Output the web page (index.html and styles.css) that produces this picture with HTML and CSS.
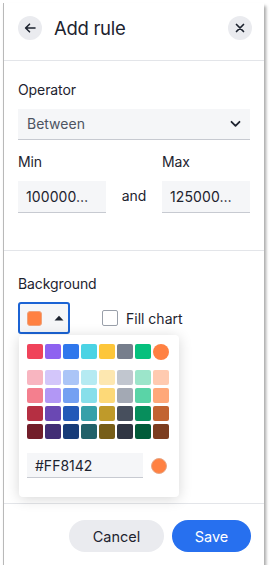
FILE: index.html
```html
<!DOCTYPE html>
<html>
<head>
<meta charset="utf-8">
<link rel="stylesheet" href="styles.css">
</head>
<body>
<div class="panel">
  <div class="header">
    <button class="icon-btn" aria-label="Back">
      <svg width="12" height="12" viewBox="0 0 12 12"><path d="M11 6H1.8M5.5 2.2L1.6 6l3.9 3.8" fill="none" stroke="#1d232f" stroke-width="1.6" stroke-linecap="round" stroke-linejoin="round"/></svg>
    </button>
    <div class="title">Add rule</div>
    <button class="icon-btn" aria-label="Close">
      <svg width="10" height="10" viewBox="0 0 10 10"><path d="M1.5 1.5l7 7M8.5 1.5l-7 7" fill="none" stroke="#1d232f" stroke-width="1.7" stroke-linecap="round"/></svg>
    </button>
  </div>
  <div class="section cond">
    <div class="label">Operator</div>
    <div class="select">
      <span>Between</span>
      <svg width="11" height="8" viewBox="0 0 11 8"><path d="M1.5 1.8l4 4 4-4" fill="none" stroke="#1d232f" stroke-width="1.8" stroke-linecap="round" stroke-linejoin="round"/></svg>
    </div>
    <div class="range">
      <div class="field">
        <div class="label">Min</div>
        <div class="input">100000…</div>
      </div>
      <div class="and">and</div>
      <div class="field">
        <div class="label">Max</div>
        <div class="input">125000…</div>
      </div>
    </div>
  </div>
  <div class="section bg">
    <div class="label">Background</div>
    <div class="bg-row">
      <div class="color-btn">
        <span class="chip"></span>
        <svg width="10" height="6" viewBox="0 0 10 6"><path d="M0.5 5.5L5 0.8l4.5 4.7z" fill="#1d232f"/></svg>
      </div>
      <label class="check"><span class="box"></span>Fill chart</label>
    </div>
    <div class="popover">
      <div class="grid top">
        <span style="background:#f0435a"></span><span style="background:#8e62f0"></span><span style="background:#2f77ec"></span><span style="background:#4bd3e4"></span><span style="background:#fdc63a"></span><span style="background:#767e8c"></span><span style="background:#06c07d"></span><span class="sel" style="background:#ff8142"></span>
      </div>
      <div class="grid">
        <span style="background:#f8b5c0"></span><span style="background:#d3c6fa"></span><span style="background:#abc5f7"></span><span style="background:#b5eaf2"></span><span style="background:#fde7b0"></span><span style="background:#c1c6cf"></span><span style="background:#9ce5ca"></span><span style="background:#ffcab0"></span>
        <span style="background:#f47f8e"></span><span style="background:#b297f5"></span><span style="background:#74a0f2"></span><span style="background:#87dfea"></span><span style="background:#fdd978"></span><span style="background:#a3a9b4"></span><span style="background:#5ad4a7"></span><span style="background:#ffa879"></span>
        <span style="background:#b52f42"></span><span style="background:#6a48b3"></span><span style="background:#2359b8"></span><span style="background:#36a0a9"></span><span style="background:#bf9a2a"></span><span style="background:#474f5d"></span><span style="background:#078e5c"></span><span style="background:#c26331"></span>
        <span style="background:#721e2a"></span><span style="background:#422d75"></span><span style="background:#173b78"></span><span style="background:#216169"></span><span style="background:#775e18"></span><span style="background:#2f3542"></span><span style="background:#025b39"></span><span style="background:#7c3d1f"></span>
      </div>
      <div class="hex-row">
        <div class="hex">#FF8142</div>
        <span class="dot"></span>
      </div>
    </div>
  </div>
  <div class="footer">
    <button class="btn cancel">Cancel</button>
    <button class="btn save">Save</button>
  </div>
</div>
</body>
</html>
```

FILE: styles.css
```css
* { box-sizing: border-box; }
html, body { margin: 0; padding: 0; background: #fff; }
body {
  padding: 3px 0 0 3px;
  font-family: Inter, "Noto Sans", sans-serif;
  color: #1d232f;
}
.panel {
  width: 261px;
  height: 562px;
  background: #fff;
  border-left: 1px solid #b9b9b9;
  box-shadow: 2px 3px 3px rgba(0,0,0,0.35);
  display: flex;
  flex-direction: column;
}
.header {
  height: 58px;
  flex: none;
  display: flex;
  align-items: center;
  padding: 0 12px 8px 14px;
  border-bottom: 1px solid #e3e5e9;
}
.icon-btn {
  width: 24px;
  height: 24px;
  border-radius: 50%;
  border: none;
  background: #eaebef;
  padding: 0;
  display: flex;
  align-items: center;
  justify-content: center;
  flex: none;
}
.title {
  flex: 1;
  margin-left: 12px;
  font-size: 18.5px;
  letter-spacing: -0.3px;
  color: #1d232f;
}
.section { padding: 0 14px; position: relative; }
.label {
  font-size: 14px;
  line-height: 20px;
  color: #1d232f;
  letter-spacing: -0.1px;
}
.cond { padding-top: 19px; height: 190px; flex: none; border-bottom: 1px solid #e3e5e9; }
.select {
  margin-top: 9px;
  height: 31px;
  background: #f5f6f8;
  border-bottom: 1px solid #c7cad1;
  display: flex;
  align-items: center;
  justify-content: space-between;
  padding: 0 9px 1px 9px;
  font-size: 14px;
  color: #4d5462;
}
.range {
  margin-top: 12px;
  display: flex;
  align-items: flex-end;
}
.field { width: 88px; }
.field .input {
  margin-top: 9px;
  height: 32px;
  background: #f5f6f8;
  border-bottom: 1px solid #c7cad1;
  display: flex;
  align-items: center;
  padding-left: 8px;
  font-size: 14px;
  letter-spacing: 0.1px;
  color: #1d232f;
}
.and {
  width: 56px;
  text-align: center;
  font-size: 14px;
  height: 32px;
  line-height: 30px;
  color: #1d232f;
}
.bg { flex: 1; padding-top: 23px; }
.bg-row { margin-top: 8px; display: flex; align-items: center; }
.color-btn {
  width: 52px;
  height: 32px;
  border: 2px solid #1b63d4;
  border-radius: 3px;
  background: #f5f6f8;
  display: flex;
  align-items: center;
  padding-left: 7px;
  gap: 12px;
}
.chip {
  width: 15px;
  height: 15px;
  border-radius: 3px;
  background: #ff8142;
  border: 1px solid #f0a27a;
}
.check {
  margin-left: 32px;
  display: flex;
  align-items: center;
  font-size: 14px;
  color: #1d232f;
}
.box {
  width: 16px;
  height: 16px;
  border: 1.5px solid #9aa0aa;
  border-radius: 2px;
  margin-right: 8px;
  background: #fff;
}
.popover {
  position: absolute;
  left: 15px;
  top: 84px;
  width: 160px;
  height: 162px;
  background: #fff;
  border-radius: 4px;
  box-shadow: 0 2px 14px rgba(0,0,0,0.16);
  padding: 9px 8px;
}
.grid {
  display: grid;
  grid-template-columns: repeat(8, 16px);
  grid-auto-rows: 15px;
  gap: 3px 2px;
}
.grid span { border-radius: 2px; }
.grid span.sel { border-radius: 50%; width: 16px; height: 16px; }
.grid.top { margin-bottom: 11px; }
.hex-row { display: flex; align-items: center; margin-top: 14px; }
.hex {
  width: 116px;
  height: 25px;
  background: #f5f6f8;
  border-bottom: 1px solid #c7cad1;
  font-size: 14px;
  padding-left: 8px;
  display: flex;
  align-items: center;
  color: #1d232f;
}
.dot {
  width: 16px;
  height: 16px;
  border-radius: 50%;
  background: #ff8142;
  margin-left: 8px;
  border: 1px solid #e7a888;
}
.footer {
  flex: none;
  height: 62px;
  border-top: 1px solid #e3e5e9;
  display: flex;
  justify-content: flex-end;
  align-items: flex-start;
  padding: 16px 13px 0 0;
  gap: 8px;
}
.btn {
  height: 32px;
  border-radius: 16px;
  border: none;
  font-family: Inter, "Noto Sans", sans-serif;
  font-size: 14.5px;
}
.cancel { width: 95px; background: #eaebef; color: #1d232f; }
.save { width: 79px; background: #2770ef; color: #fff; }
```
